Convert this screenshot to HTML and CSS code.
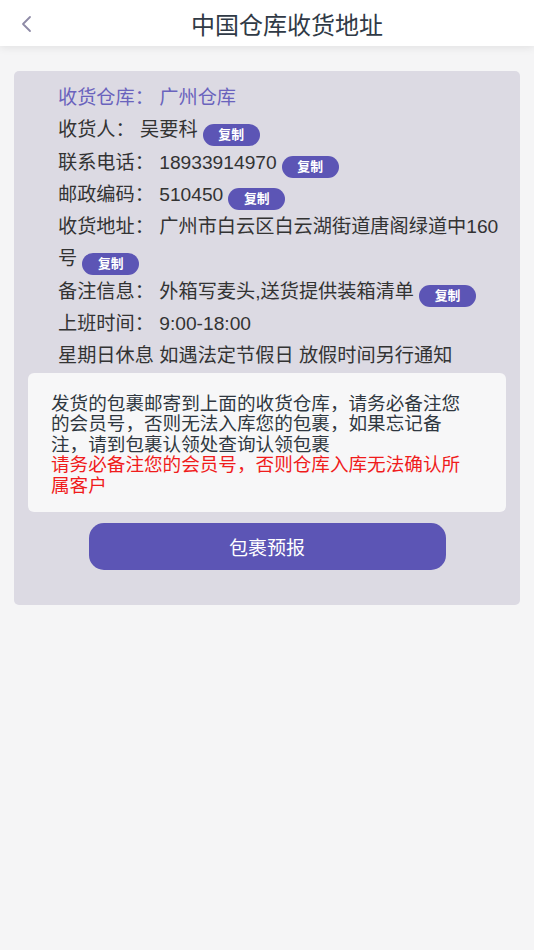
FILE: index.html
```html
<!DOCTYPE html>
<html lang="zh-CN">
<head>
    <meta charset="UTF-8">
    <meta name="viewport" content="width=device-width, initial-scale=1.0">
    <title>中国仓库收货地址</title>
    <link rel="stylesheet" href="styles.css">
</head>
<body>
    <header class="top-bar">
        <span class="back-btn">
            <svg width="14" height="18" viewBox="0 0 14 18"><path d="M11 2 L4 9 L11 16" fill="none" stroke="#8e8aa6" stroke-width="1.8" stroke-linecap="round" stroke-linejoin="round"/></svg>
        </span>
        <h1>中国仓库收货地址</h1>
    </header>

    <div class="address-card">
        <div class="info-list">
            <p class="info-row highlight">收货仓库： 广州仓库</p>
            <p class="info-row">收货人： 吴要科<span class="copy-btn">复制</span></p>
            <p class="info-row">联系电话： 18933914970<span class="copy-btn">复制</span></p>
            <p class="info-row">邮政编码： 510450<span class="copy-btn">复制</span></p>
            <p class="info-row">收货地址： 广州市白云区白云湖街道唐阁绿道中160号<span class="copy-btn">复制</span></p>
            <p class="info-row">备注信息： 外箱写麦头,送货提供装箱清单<span class="copy-btn">复制</span></p>
            <p class="info-row">上班时间： 9:00-18:00</p>
            <p class="info-row">星期日休息 如遇法定节假日 放假时间另行通知</p>
        </div>

        <div class="notice">
            发货的包裹邮寄到上面的收货仓库，请务必备注您的会员号，否则无法入库您的包裹，如果忘记备注，请到包裹认领处查询认领包裹
            <span class="notice-red">请务必备注您的会员号，否则仓库入库无法确认所属客户</span>
        </div>

        <button class="forecast-btn">包裹预报</button>
    </div>
</body>
</html>
```

FILE: styles.css
```css
* {
    box-sizing: border-box;
    margin: 0;
    padding: 0;
}

body {
    font-family: 'Liberation Sans', 'Noto Sans CJK SC', sans-serif;
    background-color: #f5f5f6;
    color: #333;
}

.top-bar {
    height: 46px;
    padding-left: 40px;
    background-color: #fff;
    box-shadow: 0 2px 8px rgba(0, 0, 0, 0.08);
    display: flex;
    align-items: center;
    justify-content: center;
    position: relative;
}

.top-bar h1 {
    font-size: 24px;
    font-weight: normal;
    color: #303a46;
}

.back-btn {
    position: absolute;
    left: 19px;
    top: 15px;
    display: flex;
}

.address-card {
    margin: 25px 14px 0;
    padding: 11px 14px 35px;
    background-color: #dcdae3;
    border-radius: 5px;
}

.info-list {
    padding-left: 30px;
}

.info-row {
    font-size: 19.2px;
    line-height: 32.3px;
    color: #333;
}

.info-row.highlight {
    color: #6a63bd;
}

.copy-btn {
    display: inline-block;
    width: 57px;
    height: 22px;
    line-height: 22px;
    margin: 0 0 1px 5px;
    border-radius: 11px;
    background-color: #5c55b5;
    color: #fff;
    font-size: 12.8px;
    font-weight: bold;
    text-align: center;
    vertical-align: bottom;
}

.notice {
    background-color: #f7f7f8;
    border-radius: 6px;
    padding: 21px 40px 16px 23px;
    font-size: 18.6px;
    line-height: 20.5px;
    color: #2f3740;
}

.notice-red {
    display: block;
    color: #f01c1c;
}

.forecast-btn {
    display: block;
    width: 357px;
    height: 47px;
    margin: 11px auto 0;
    border: none;
    border-radius: 15px;
    background-color: #5c55b5;
    color: #fff;
    font-family: inherit;
    font-size: 19px;
}
```
